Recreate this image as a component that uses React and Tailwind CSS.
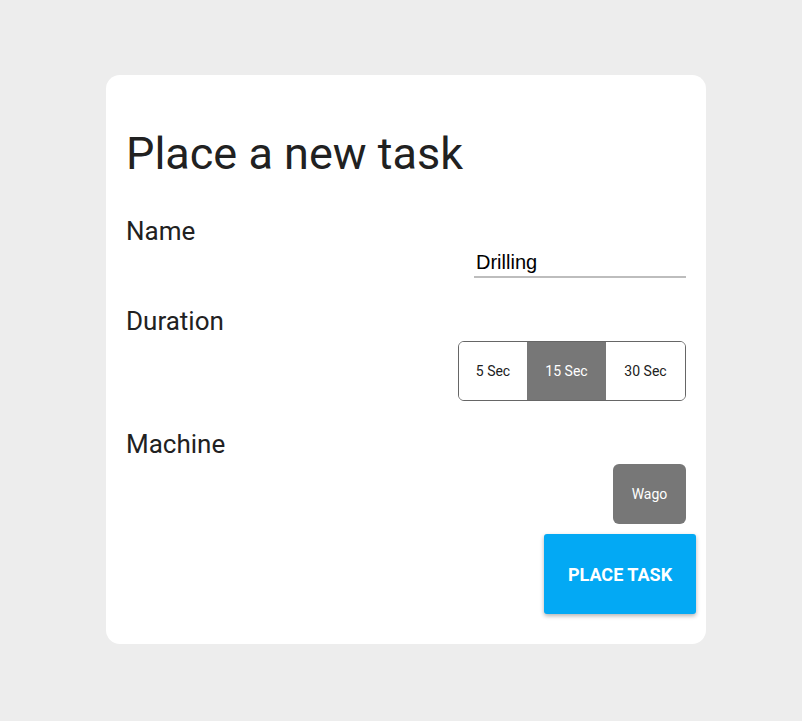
import React, { useState } from 'react';

const durations = ['5 Sec', '15 Sec', '30 Sec'];

const App = () => {
    const [duration, setDuration] = useState('15 Sec');
    const [name, setName] = useState('Drilling');

    return (
        <div className="min-h-screen bg-[#ededed] flex justify-center pt-[75px] pl-[10px] font-['Roboto',sans-serif]">
            <div className="w-[600px] h-[569px] bg-white rounded-[14px] pl-5 pr-5 pt-[55px] flex flex-col">
                <h1 className="text-[45px] leading-[48px] text-[#212121] font-normal">Place a new task</h1>

                {/* Name */}
                <div className="mt-[40px] text-[26px] leading-[26px] text-[#212121]">Name</div>
                <div className="flex justify-end mt-[6px]">
                    <input
                        value={name}
                        onChange={e => setName(e.target.value)}
                        className="w-[212px] border-b-2 border-[#bdbdbd] pl-[2px] pb-[2px] text-[20px] leading-[24px] text-black font-['Liberation_Sans',sans-serif] outline-none"
                    />
                </div>

                {/* Duration */}
                <div className="mt-[30px] text-[26px] leading-[26px] text-[#212121]">Duration</div>
                <div className="flex justify-end mt-[7px]">
                    <div className="flex h-[60px] border border-[#666] rounded-[6px] overflow-hidden">
                        {durations.map(d => (
                            <button
                                key={d}
                                onClick={() => setDuration(d)}
                                className={`text-[14px] ${d === '5 Sec' ? 'w-[68px]' : 'w-[79px]'} ${duration === d
                                    ? 'bg-[#777777] text-white'
                                    : 'bg-white text-[#212121]'
                                    }`}
                            >
                                {d}
                            </button>
                        ))}
                    </div>
                </div>

                {/* Machine */}
                <div className="mt-[30px] text-[26px] leading-[26px] text-[#212121]">Machine</div>
                <div className="flex justify-end mt-[7px]">
                    <button className="w-[73px] h-[60px] rounded-[6px] bg-[#777777] text-white text-[14px]">Wago</button>
                </div>

                <div className="flex justify-end mt-[10px] -mr-[10px]">
                    <button className="w-[152px] h-[80px] rounded-[3px] bg-[#03a9f4] text-white text-[18px] font-bold uppercase shadow-[0_2px_4px_rgba(0,0,0,0.3)]">
                        Place Task
                    </button>
                </div>
            </div>
        </div>
    );
};

export default App;
